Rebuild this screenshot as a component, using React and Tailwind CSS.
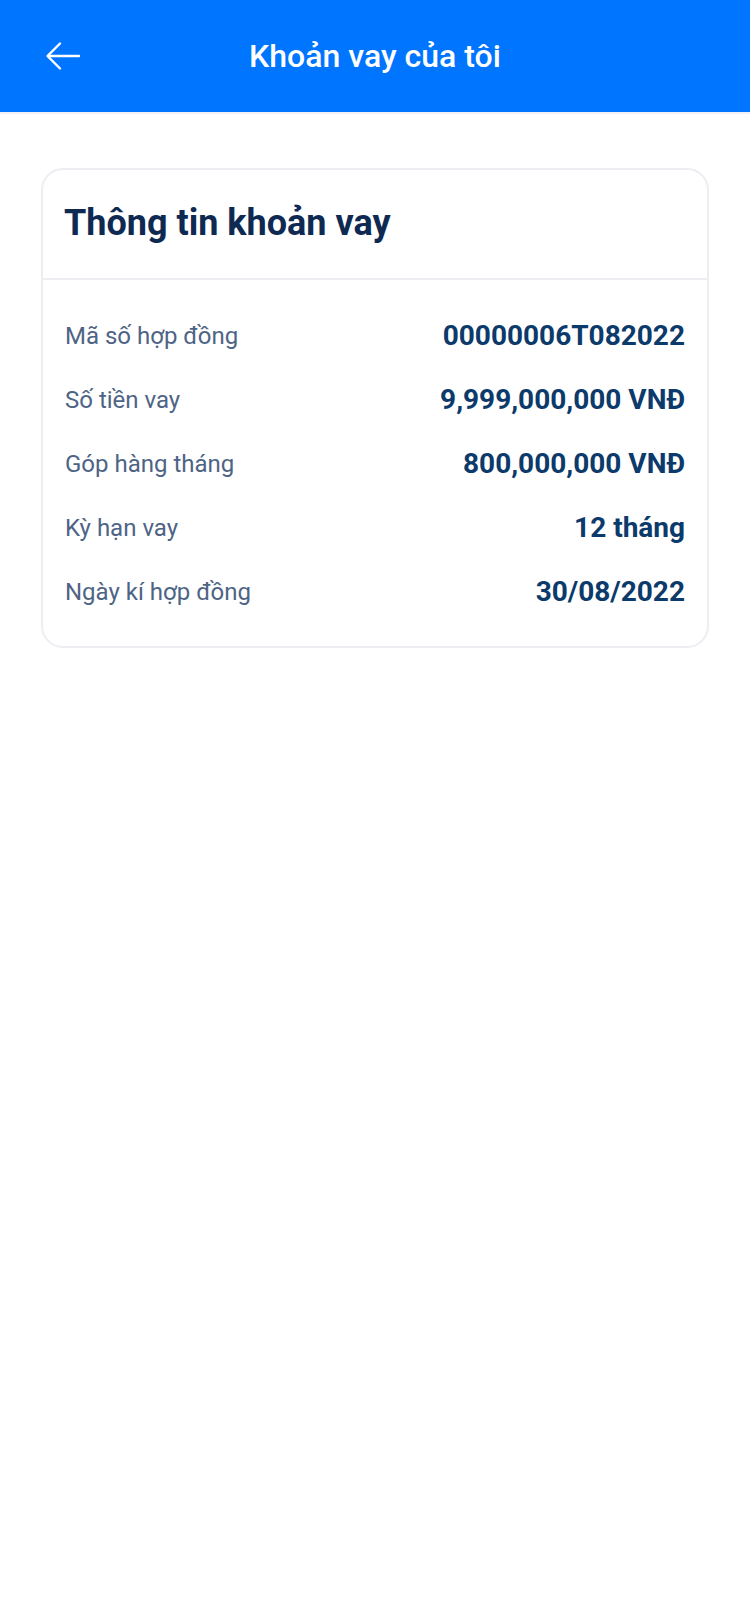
import React from "react";

const rows = [
  { label: "Mã số hợp đồng", value: "00000006T082022" },
  { label: "Số tiền vay", value: "9,999,000,000 VNĐ" },
  { label: "Góp hàng tháng", value: "800,000,000 VNĐ" },
  { label: "Kỳ hạn vay", value: "12 tháng" },
  { label: "Ngày kí hợp đồng", value: "30/08/2022" },
];

const BackArrow = () => (
  <svg width="36" height="30" viewBox="0 0 36 30" fill="none">
    <path
      d="M34 15H3M15 2.5L2.5 15L15 27.5"
      stroke="white"
      strokeWidth="2.4"
      strokeLinecap="round"
      strokeLinejoin="round"
    />
  </svg>
);

const App = () => {
  return (
    <div className="min-h-screen bg-white font-['Roboto',sans-serif]">
      <div className="relative flex h-[112px] items-center justify-center bg-[#0075ff]">
        <button className="absolute left-[45px] top-[41px]">
          <BackArrow />
        </button>
        <h1 className="text-[32px] font-medium text-white">Khoản vay của tôi</h1>
      </div>
      <div className="h-[2px] bg-[#f0f1f5]" />

      <div className="px-[41px] pt-[54px]">
        <div className="rounded-[22px] border-2 border-[#ededf2] bg-white">
          <div className="border-b-2 border-[#ededf2] px-[21px] pb-[32px] pt-[30px]">
            <h2 className="text-[36px] font-bold leading-[46px] text-[#0f2a52]">
              Thông tin khoản vay
            </h2>
          </div>
          <div className="flex flex-col gap-[28px] px-[22px] pb-[36px] pt-[38px]">
            {rows.map((r) => (
              <div key={r.label} className="flex items-center justify-between">
                <span className="text-[24px] leading-[36px] text-[#4e6485]">{r.label}</span>
                <span className="text-[28px] font-bold leading-[36px] text-[#0b3a6b]">{r.value}</span>
              </div>
            ))}
          </div>
        </div>
      </div>
    </div>
  );
};

export default App;
